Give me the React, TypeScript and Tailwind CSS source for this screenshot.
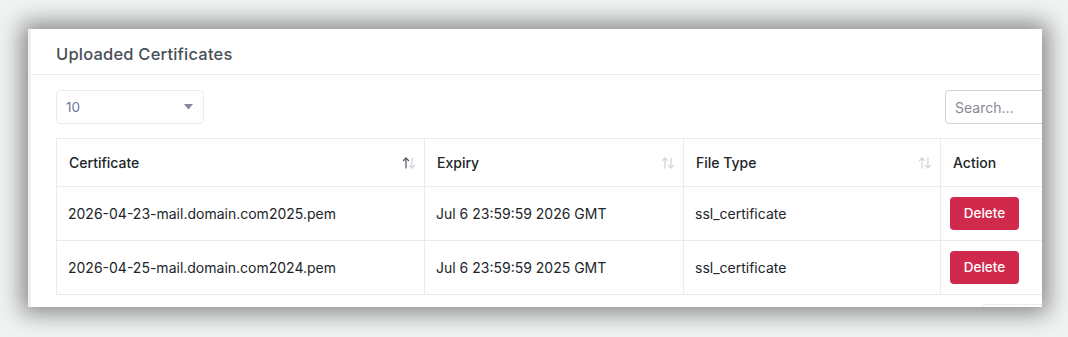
import React from "react";

const font = { fontFamily: "Inter, 'Noto Sans', sans-serif" };

function SortIcon({ active }: { active?: boolean }) {
  return (
    <svg width="14" height="14" viewBox="0 0 14 14" className="shrink-0">
      <g strokeWidth="1.2" fill="none" strokeLinecap="round">
        <g stroke={active ? "#495057" : "#ced4da"}>
          <line x1="4" y1="2" x2="4" y2="12" />
          <polyline points="1.5,4.5 4,2 6.5,4.5" />
        </g>
        <g stroke="#ced4da">
          <line x1="10" y1="2" x2="10" y2="12" />
          <polyline points="7.5,9.5 10,12 12.5,9.5" />
        </g>
      </g>
    </svg>
  );
}

const rows = [
  ["2026-04-23-mail.domain.com2025.pem", "Jul 6 23:59:59 2026 GMT", "ssl_certificate"],
  ["2026-04-25-mail.domain.com2024.pem", "Jul 6 23:59:59 2025 GMT", "ssl_certificate"],
];

export default function App() {
  return (
    <div
      className="w-[1068px] h-[337px] bg-[#f0f3f2] pt-[29px] pl-[28px] overflow-hidden"
      style={font}
    >
      <div className="w-[1014px] h-[278px] bg-white flex overflow-hidden shadow-[0_0_22px_6px_rgba(0,0,0,0.45)]">
        <div className="w-[3px] bg-[#eef0f3] shrink-0" />
        <div className="flex-1 min-w-0 overflow-hidden pr-[2px]">
          <div className="h-[46px] border-b border-[#e9ebec] pl-[25px] pt-[5px] flex items-center">
            <h2 className="text-[16.5px] font-medium text-[#495057] tracking-[0.2px]">Uploaded Certificates</h2>
          </div>
          <div className="pl-[25px] pt-[15px]">
            <div className="flex items-center justify-between w-[1019px]">
              <div className="w-[148px] h-[34px] border border-[#e9ebec] rounded-[4px] flex items-center justify-between pl-[9px] pr-[10px]">
                <span className="text-[13.5px] text-[#6b76a0]">10</span>
                <svg width="9" height="6" viewBox="0 0 9 6"><polygon points="0,0 9,0 4.5,5.5" fill="#878a99" /></svg>
              </div>
              <div className="w-[130px] h-[34px] border border-[#ced4da] rounded-[4px] flex items-center pl-[9px]">
                <span className="text-[14px] text-[#878a99]">Search...</span>
              </div>
            </div>
            <table className="mt-[14px] border-collapse w-[1000px] table-fixed text-[14px] text-[#212529]">
              <colgroup>
                <col className="w-[368px]" />
                <col className="w-[259px]" />
                <col className="w-[257px]" />
                <col className="w-[116px]" />
              </colgroup>
              <thead>
                <tr className="h-[48px]">
                  {["Certificate", "Expiry", "File Type"].map((h, i) => (
                    <th key={h} className="border border-[#e9ebec] pl-[12px] pr-[8px] text-left font-medium">
                      <div className="flex items-center justify-between">
                        <span>{h}</span>
                        <SortIcon active={i === 0} />
                      </div>
                    </th>
                  ))}
                  <th className="border border-[#e9ebec] px-[12px] text-left font-medium">Action</th>
                </tr>
              </thead>
              <tbody>
                {rows.map((r, i) => (
                  <tr key={i} className="h-[54px]">
                    {r.map((c, j) => (
                      <td key={j} className="border border-[#e9ebec] px-[11px]">{c}</td>
                    ))}
                    <td className="border border-[#e9ebec] px-[9px]">
                      <button className="h-[33px] w-[69px] rounded-[4px] bg-[#d0294b] text-white text-[13.5px] font-medium">Delete</button>
                    </td>
                  </tr>
                ))}
              </tbody>
            </table>
            <div className="flex justify-end w-[1026px] mt-[9px]">
              <div className="w-[100px] h-[30px] border border-[#e9ebec] rounded-[4px]" />
            </div>
          </div>
        </div>
      </div>
    </div>
  );
}
